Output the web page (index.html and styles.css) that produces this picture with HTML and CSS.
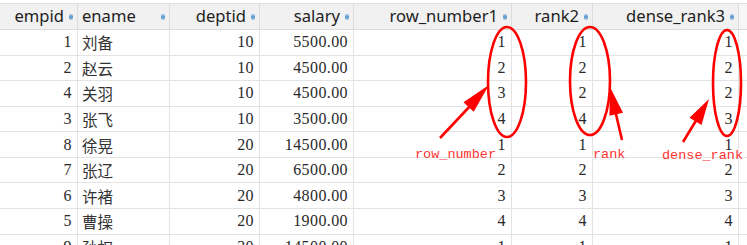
FILE: index.html
```html
<!DOCTYPE html>
<html>
<head>
<meta charset="utf-8">
<link rel="stylesheet" href="styles.css">
</head>
<body>
<div class="page">
  <div class="grid">
    <div class="hc r">empid<i class="sort"></i></div>
    <div class="hc l">ename<i class="sort"></i></div>
    <div class="hc r">deptid<i class="sort"></i></div>
    <div class="hc r">salary<i class="sort"></i></div>
    <div class="hc r">row_number1<i class="sort"></i></div>
    <div class="hc r">rank2<i class="sort"></i></div>
    <div class="hc r">dense_rank3<i class="sort"></i></div>
    <div class="hc e"></div>

    <div class="c n">1</div><div class="c t">刘备</div><div class="c n">10</div><div class="c n">5500.00</div><div class="c n">1</div><div class="c n">1</div><div class="c n">1</div><div class="c e"></div>
    <div class="c n">2</div><div class="c t">赵云</div><div class="c n">10</div><div class="c n">4500.00</div><div class="c n">2</div><div class="c n">2</div><div class="c n">2</div><div class="c e"></div>
    <div class="c n">4</div><div class="c t">关羽</div><div class="c n">10</div><div class="c n">4500.00</div><div class="c n">3</div><div class="c n">2</div><div class="c n">2</div><div class="c e"></div>
    <div class="c n">3</div><div class="c t">张飞</div><div class="c n">10</div><div class="c n">3500.00</div><div class="c n">4</div><div class="c n">4</div><div class="c n">3</div><div class="c e"></div>
    <div class="c n">8</div><div class="c t">徐晃</div><div class="c n">20</div><div class="c n">14500.00</div><div class="c n">1</div><div class="c n">1</div><div class="c n">1</div><div class="c e"></div>
    <div class="c n">7</div><div class="c t">张辽</div><div class="c n">20</div><div class="c n">6500.00</div><div class="c n">2</div><div class="c n">2</div><div class="c n">2</div><div class="c e"></div>
    <div class="c n">6</div><div class="c t">许褚</div><div class="c n">20</div><div class="c n">4800.00</div><div class="c n">3</div><div class="c n">3</div><div class="c n">3</div><div class="c e"></div>
    <div class="c n">5</div><div class="c t">曹操</div><div class="c n">20</div><div class="c n">1900.00</div><div class="c n">4</div><div class="c n">4</div><div class="c n">4</div><div class="c e"></div>
    <div class="c n">9</div><div class="c t">孙权</div><div class="c n">30</div><div class="c n">14500.00</div><div class="c n">1</div><div class="c n">1</div><div class="c n">1</div><div class="c e"></div>
  </div>

  <svg class="notes" width="747" height="245" viewBox="0 0 747 245">
    <g fill="none" stroke="#ff0000" stroke-width="2.6">
      <ellipse cx="507" cy="82" rx="19" ry="55"/>
      <ellipse cx="590" cy="81" rx="20" ry="54"/>
      <ellipse cx="727" cy="83" rx="14" ry="53"/>
      <line x1="440" y1="138" x2="472" y2="104"/>
      <line x1="622" y1="140" x2="615" y2="110"/>
      <line x1="683" y1="142" x2="697" y2="119"/>
    </g>
    <g fill="#ff0000">
      <polygon points="489,85 473.7,111.8 463.5,102.2"/>
      <polygon points="610,87 623,112.8 609.4,115.8"/>
      <polygon points="709,99 701.5,124.9 689.5,117.7"/>
    </g>
    <g class="lbl">
      <text x="415" y="158">row_number</text>
      <text x="593" y="158">rank</text>
      <text x="662" y="159">dense_rank</text>
    </g>
  </svg>
</div>
</body>
</html>
```
FILE: styles.css
```css
html, body {
  margin: 0;
  padding: 0;
  background: #ffffff;
}
.page {
  position: relative;
  width: 747px;
  height: 245px;
  overflow: hidden;
}
.grid {
  margin-top: 3px;
  border-top: 1px solid #dedede;
  display: grid;
  grid-template-columns: 78px 92px 90px 94px 158px 81px 146px 8px;
  grid-template-rows: 26px;
  grid-auto-rows: 25.57px;
}
.hc {
  box-sizing: border-box;
  background: #f1f1f1;
  border-right: 1px solid #dcdcdc;
  border-bottom: 1px solid #dcdcdc;
  font-family: "Noto Sans", "Open Sans", sans-serif;
  font-size: 16.6px;
  color: #1e1e1e;
  display: flex;
  align-items: center;
  gap: 5px;
  padding-right: 4px;
  white-space: nowrap;
  line-height: 1;
}
.hc.r { justify-content: flex-end; }
.hc.l { justify-content: space-between; padding-left: 4px; }
.hc.e { border-right: none; background: #f6f6f6; }
.sort {
  display: block;
  width: 4px;
  height: 6px;
  border-radius: 2px;
  background: linear-gradient(#a9c6e4, #5f98cf 50%, #a9c6e4);
}
.c {
  box-sizing: border-box;
  border-right: 1px solid #e3e3e3;
  border-bottom: 1px solid #e3e3e3;
  display: flex;
  align-items: center;
  color: #2a2a2a;
  white-space: nowrap;
}
.c.n {
  justify-content: flex-end;
  padding-right: 5px;
  font-family: "Liberation Serif", "DejaVu Serif", serif;
  font-size: 16px;
  letter-spacing: 0.4px;
}
.c.t {
  padding-left: 4px;
  font-family: "Noto Sans CJK SC", sans-serif;
  font-size: 15.5px;
  color: #333;
}
.c.e { border-right: none; }
.notes {
  position: absolute;
  left: 0;
  top: 0;
  pointer-events: none;
}
.lbl text {
  font-family: "Liberation Mono", "DejaVu Sans Mono", monospace;
  font-size: 13.5px;
  fill: #ff3333;
}
```
